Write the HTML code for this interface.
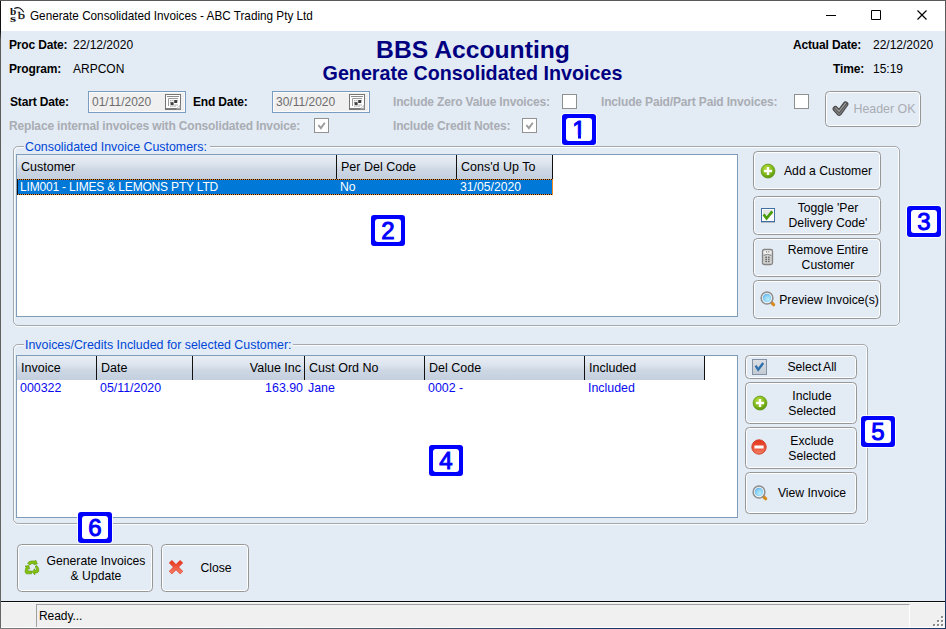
<!DOCTYPE html>
<html><head><meta charset="utf-8"><title>Generate Consolidated Invoices</title>
<style>
*{box-sizing:border-box;margin:0;padding:0}
html,body{width:946px;height:629px;overflow:hidden;background:#e3ebf5;font-family:"Liberation Sans",sans-serif;font-size:12px;color:#000}
.a{position:absolute;white-space:nowrap}
#win{position:absolute;left:0;top:0;width:946px;height:629px;background:#e3ebf5}
#title{position:absolute;left:0;top:0;width:946px;height:31px;background:#fff}
#title .t{position:absolute;left:30px;top:7.700px;font-size:11.7px;color:#000;transform:scale(1.003,1.1);transform-origin:0 0}
.b{font-weight:bold;font-size:12px;letter-spacing:-0.16px}
.g{color:#a9adb3}
.h1{font-size:24.7px;font-weight:bold;color:#000080;text-align:center;width:946px;left:0}
.h2{font-size:19.7px;font-weight:bold;color:#000080;text-align:center;width:945px;left:0}
.inp{position:absolute;height:22px;border:1px solid #7a9cc0;background:#f0f0f0;box-shadow:inset 0 0 0 1px #fbfbfb;color:#6d6d6d;font-size:12px;padding:3px 0 0 3px}
.cb{position:absolute;width:15px;height:15px;border:1px solid #8e8f8f;background:#fff}
.cbd{position:absolute;width:15px;height:15px;border:1px solid #929292;background:#fff}
.grp{position:absolute;border:1px solid #a5a8ad;border-radius:5px;box-shadow:inset 1px 1px 0 #fbfcfe,inset -1px 0 0 #fbfcfe,0 1px 0 #fbfcfe}
.grp .lg{position:absolute;top:-7px;left:10px;background:#e3ebf5;color:#0046d5;font-size:12.4px;padding:0 3px 0 1px;line-height:14px}
.tbl{position:absolute;background:#fff;border:1px solid #7f9db9}
.th{position:absolute;top:0;font-size:12.5px;background:linear-gradient(#e9eef5,#dbe3ed 40%,#cdd7e4 60%,#c4cfdf);border-right:1px solid #111;padding:5px 0 0 4px;color:#000}
.btn{position:absolute;border:1px solid #979797;border-radius:4.500px;background:#e3ebf5;box-shadow:inset 0 0 0 1px #fdfeff;font-size:12.2px;color:#000;text-align:center;line-height:15px}
.num{position:absolute;width:34px;height:31px;padding:4px;border-radius:3px;background:#0000ff;box-shadow:0 0 0 1px rgba(255,255,255,.85)}
.num span{display:block;width:26px;height:23px;border-radius:3px;background:#fff;color:#0000ff;font-size:24px;line-height:23px;text-align:center;-webkit-text-stroke:1px #0000ff}
.ic{position:absolute}
</style></head><body>
<div id="win">
<svg width="0" height="0" style="position:absolute"><defs>
<radialGradient id="gG" cx="0.4" cy="0.3" r="0.8"><stop offset="0" stop-color="#b4dc3c"/><stop offset="0.6" stop-color="#7cb518"/><stop offset="1" stop-color="#4f8a08"/></radialGradient>
<linearGradient id="gR" x1="0" y1="0" x2="0" y2="1"><stop offset="0" stop-color="#e23a22"/><stop offset="0.5" stop-color="#ea4d34"/><stop offset="1" stop-color="#f68468"/></linearGradient>
<radialGradient id="gL" cx="0.6" cy="0.65" r="0.7"><stop offset="0" stop-color="#b8ecfa"/><stop offset="0.7" stop-color="#86cdf3"/><stop offset="1" stop-color="#4aa3e8"/></radialGradient>
<linearGradient id="gB" x1="0" y1="0" x2="0" y2="1"><stop offset="0" stop-color="#dcdfe3"/><stop offset="1" stop-color="#c3cad3"/></linearGradient>
<linearGradient id="gX" x1="0" y1="0" x2="0" y2="1"><stop offset="0" stop-color="#e8391f"/><stop offset="1" stop-color="#f57a64"/></linearGradient>
</defs></svg>
<div id="title">
<svg class="ic" style="left:8px;top:4px" width="20" height="20" viewBox="0 0 20 20"><g font-family="Liberation Serif,serif" fill="#111"><text transform="translate(1.9 10.6) scale(1.05 1)" font-size="10.800" font-weight="bold">b</text><text transform="translate(1.9 17.7) scale(1.5 1)" font-size="10.400" font-weight="bold">s</text><text transform="translate(9.7 14.7) scale(1.35 1)" font-size="10.800" stroke="#111" stroke-width="0.250">b</text></g><path d="M6.300 4.600Q12 1.400 15.800 8.300" stroke="#111" stroke-width="1.100" fill="none"/></svg>
<span class="t">Generate Consolidated Invoices - ABC Trading Pty Ltd</span>
<svg class="ic" style="left:820px;top:5px" width="120" height="20" viewBox="0 0 120 20"><path d="M6 10.5h10M51.500 5.500h9v9h-9z" stroke="#000" stroke-width="1" fill="none"/><path d="M97.500 5.500l9 9M106.500 5.500l-9 9" stroke="#000" stroke-width="1.200" fill="none"/></svg>
</div>

<span class="a b" style="left:9px;top:38px">Proc Date:</span><span class="a" style="left:73px;top:38px">22/12/2020</span>
<span class="a b" style="left:9px;top:62px">Program:</span><span class="a" style="left:73px;top:62px">ARPCON</span>
<span class="a h1" style="top:36px">BBS Accounting</span>
<span class="a h2" style="top:62px">Generate Consolidated Invoices</span>
<span class="a b" style="left:793px;top:38px">Actual Date:</span><span class="a" style="left:873px;top:38px">22/12/2020</span>
<span class="a b" style="left:833px;top:62px">Time:</span><span class="a" style="left:873px;top:62px">15:19</span>

<span class="a b" style="left:10px;top:95px">Start Date:</span>
<div class="inp" style="left:88px;top:91px;width:98px">01/11/2020<svg class="ic" style="left:76px;top:2px" width="16" height="16" viewBox="0 0 16 16"><rect x="0.500" y="0.500" width="15" height="15" fill="#fff" stroke="#747474"/><rect x="1" y="14" width="14" height="1.500" fill="#7c7c7c"/><path d="M2 2.500h12" stroke="#8a8a8a"/><path d="M3.500 4.500h9.500M3.500 4.500v7.500" stroke="#9a9a9a" fill="none"/><g fill="#a8a8a8"><rect x="5" y="6" width="1.300" height="1.300"/><rect x="7.200" y="6" width="1.300" height="1.300"/><rect x="11.400" y="6" width="1.300" height="1.300"/><rect x="5" y="8" width="1.300" height="1.300"/><rect x="9.400" y="10.400" width="1.300" height="1.300"/><rect x="11.400" y="10.400" width="1.300" height="1.300"/><rect x="5" y="11.800" width="1.300" height="1"/><rect x="7.200" y="11.800" width="1.300" height="1"/><rect x="9.400" y="11.800" width="1.300" height="1"/></g><rect x="9.200" y="6" width="3" height="3" fill="#3e3e3e"/><rect x="5.600" y="8.200" width="3" height="3" fill="#3e3e3e"/><path d="M10.500 15.500l5 -5v5z" fill="#9a9a9a"/><path d="M12.200 14.200l2.500 -2.500v2.500z" fill="#f2f2f2"/></svg></div>
<span class="a b" style="left:193px;top:95px">End Date:</span>
<div class="inp" style="left:272px;top:91px;width:98px">30/11/2020<svg class="ic" style="left:76px;top:2px" width="16" height="16" viewBox="0 0 16 16"><rect x="0.500" y="0.500" width="15" height="15" fill="#fff" stroke="#747474"/><rect x="1" y="14" width="14" height="1.500" fill="#7c7c7c"/><path d="M2 2.500h12" stroke="#8a8a8a"/><path d="M3.500 4.500h9.500M3.500 4.500v7.500" stroke="#9a9a9a" fill="none"/><g fill="#a8a8a8"><rect x="5" y="6" width="1.300" height="1.300"/><rect x="7.200" y="6" width="1.300" height="1.300"/><rect x="11.400" y="6" width="1.300" height="1.300"/><rect x="5" y="8" width="1.300" height="1.300"/><rect x="9.400" y="10.400" width="1.300" height="1.300"/><rect x="11.400" y="10.400" width="1.300" height="1.300"/><rect x="5" y="11.800" width="1.300" height="1"/><rect x="7.200" y="11.800" width="1.300" height="1"/><rect x="9.400" y="11.800" width="1.300" height="1"/></g><rect x="9.200" y="6" width="3" height="3" fill="#3e3e3e"/><rect x="5.600" y="8.200" width="3" height="3" fill="#3e3e3e"/><path d="M10.500 15.500l5 -5v5z" fill="#9a9a9a"/><path d="M12.200 14.200l2.500 -2.500v2.500z" fill="#f2f2f2"/></svg></div>
<span class="a b g" style="left:393px;top:95px">Include Zero Value Invoices:</span>
<div class="cb" style="left:562px;top:94px"></div>
<span class="a b g" style="left:601px;top:95px">Include Paid/Part Paid Invoices:</span>
<div class="cb" style="left:794px;top:94px"></div>
<span class="a b g" style="left:9px;top:119px">Replace internal invoices with Consolidated Invoice:</span>
<div class="cbd" style="left:314px;top:118px"><svg class="ic" style="left:0;top:0" width="13" height="13" viewBox="0 0 13 13"><path d="M3.400 6.200l2.500 2.900l3.900 -5.400" stroke="#9c9c9c" stroke-width="1.900" fill="none"/></svg></div>
<span class="a b g" style="left:393px;top:119px">Include Credit Notes:</span>
<div class="cbd" style="left:522px;top:118px"><svg class="ic" style="left:0;top:0" width="13" height="13" viewBox="0 0 13 13"><path d="M3.400 6.200l2.500 2.900l3.900 -5.400" stroke="#9c9c9c" stroke-width="1.900" fill="none"/></svg></div>
<div class="btn" style="left:825px;top:91px;width:96px;height:36px;line-height:34px;padding-left:23px;font-size:12.4px;color:#a9adb3">Header OK<svg class="ic" style="left:5px;top:7px" width="20" height="20" viewBox="0 0 20 20"><g fill="none" stroke-linejoin="round" stroke-linecap="round"><path d="M4.400 9.800l3.800 4.200l6.400 -8.800" stroke="#484848" stroke-width="5.600"/><path d="M4.400 9.800l3.800 4.200l6.400 -8.800" stroke="#7c7c7c" stroke-width="3.600"/><path d="M4.400 8.600l3.800 3.600l6.400 -8" stroke="#484848" stroke-width="2.800"/><path d="M4.400 8.600l3.800 3.600l6.400 -8" stroke="#a2a2a2" stroke-width="1.300"/></g></svg></div>

<div class="grp" style="left:13px;top:146px;width:887px;height:180px"><span class="lg">Consolidated Invoice Customers:</span></div>
<div class="tbl" style="left:16px;top:154px;width:722px;height:163px">
 <div class="th" style="left:0;width:320px;height:24px">Customer</div>
 <div class="th" style="left:320px;width:120px;height:24px">Per Del Code</div>
 <div class="th" style="left:440px;width:96px;height:24px">Cons'd Up To</div>
 <div class="a" style="left:0;top:24px;width:536px;height:16px;background:repeating-linear-gradient(90deg,#111 0 1px,#f08a24 1px 2px)"><div class="a" style="left:1px;top:1px;width:534px;height:14px;background:#0078d7"></div></div>
 <div class="a" style="left:0;top:25px;color:#fff;font-size:12.200px;line-height:14px"><span class="a" style="left:3px;font-size:12px;letter-spacing:-0.18px">LIM001 - LIMES &amp; LEMONS PTY LTD</span><span class="a" style="left:323px">No</span><span class="a" style="left:443px">31/05/2020</span></div>
</div>
<div class="btn" style="left:753px;top:151px;width:128px;height:39px;line-height:39px;padding-left:22px">Add a Customer<svg class="ic" style="left:5px;top:9.500px" width="18" height="18" viewBox="0 0 18 18"><circle cx="9" cy="9.6" r="7" fill="#7c8f5a" opacity="0.35"/><circle cx="9" cy="9" r="6.900" fill="url(#gG)" stroke="#5f9a10" stroke-width="0.800"/><path d="M9 4.900v8.200M4.900 9h8.200" stroke="#fff" stroke-width="2.400"/></svg></div>
<div class="btn" style="left:753px;top:196px;width:128px;height:39px;padding:4px 0 0 22px">Toggle 'Per<br>Delivery Code'<svg class="ic" style="left:7px;top:11px" width="16" height="16" viewBox="0 0 16 16"><rect x="0" y="14" width="14" height="1" fill="#8a8f96" opacity="0.55"/><rect x="0.500" y="0.500" width="13" height="13" fill="#fdfdfd" stroke="#3f6fa3" stroke-width="1"/><rect x="2" y="2" width="10" height="5" fill="#e6e6e6"/><path d="M2.600 6.400l3 3.900l5.700 -6.900" stroke="#4a9c08" stroke-width="2.700" fill="none"/></svg></div>
<div class="btn" style="left:753px;top:238px;width:128px;height:39px;padding:4px 0 0 22px">Remove Entire<br>Customer<svg class="ic" style="left:7px;top:9px" width="14" height="18" viewBox="0 0 14 18"><rect x="1.500" y="1.500" width="10" height="15" rx="1.800" fill="#d6d6d6" stroke="#858585" stroke-width="1.300"/><ellipse cx="6.500" cy="4.200" rx="4" ry="1.900" fill="#f2f2f2"/><path d="M2.600 7.600q3.900 -2.600 7.800 0" stroke="#858585" fill="none"/><g fill="#666"><rect x="4.300" y="8.600" width="1.700" height="1.400"/><rect x="6.900" y="8.600" width="1.700" height="1.400"/><rect x="4.300" y="10.700" width="1.700" height="1.400"/><rect x="6.900" y="10.700" width="1.700" height="1.400"/><rect x="4.300" y="12.800" width="1.700" height="1.400"/><rect x="6.900" y="12.800" width="1.700" height="1.400"/><rect x="5" y="3.400" width="1.200" height="1"/><rect x="7.200" y="3.400" width="1.200" height="1"/></g><g fill="#9a9a9a"><rect x="2.600" y="9.600" width="1" height="0.800"/><rect x="2.600" y="11.700" width="1" height="0.800"/><rect x="9.400" y="9.600" width="1" height="0.800"/><rect x="9.400" y="11.700" width="1" height="0.800"/></g></svg></div>
<div class="btn" style="left:753px;top:280px;width:128px;height:39px;line-height:38px;padding-left:24px">Preview Invoice(s)<svg class="ic" style="left:4.500px;top:8.800px" width="18" height="18" viewBox="0 0 18 18"><path d="M12 12.200l2.600 2.500" stroke="#d98a1c" stroke-width="3.200" stroke-linecap="round"/><circle cx="8" cy="8" r="5.900" fill="#f6f6f6" stroke="#8e8e8e" stroke-width="1.500"/><circle cx="8" cy="8" r="4.300" fill="url(#gL)"/></svg></div>

<div class="grp" style="left:13px;top:344px;width:855px;height:180px"><span class="lg" style="padding-right:1px">Invoices/Credits Included for selected Customer:</span></div>
<div class="tbl" style="left:16px;top:355px;width:722px;height:163px">
 <div class="th" style="left:0;width:80px;height:24px">Invoice</div>
 <div class="th" style="left:80px;width:96px;height:24px">Date</div>
 <div class="th" style="left:176px;width:112px;height:24px;text-align:right;padding-right:3px">Value Inc</div>
 <div class="th" style="left:288px;width:120px;height:24px">Cust Ord No</div>
 <div class="th" style="left:408px;width:160px;height:24px">Del Code</div>
 <div class="th" style="left:568px;width:120px;height:24px">Included</div>
 <div class="a" style="left:0;top:25px;color:#0a0af0;font-size:12.4px"><span class="a" style="left:3px">000322</span><span class="a" style="left:83px">05/11/2020</span><span class="a" style="left:176px;width:110px;text-align:right">163.90</span><span class="a" style="left:291px">Jane</span><span class="a" style="left:411px">0002 -</span><span class="a" style="left:571px">Included</span></div>
</div>
<div class="btn" style="left:745px;top:355px;width:112px;height:24px;line-height:22px;padding-left:22px;word-spacing:-1px">Select All<svg class="ic" style="left:6px;top:3px" width="16" height="17" viewBox="0 0 16 17"><rect x="0.500" y="0.500" width="14" height="15" fill="url(#gB)" stroke="#8492a6"/><path d="M3.600 6.600l2.600 4l5 -6.600" stroke="#2f6fad" stroke-width="2.400" fill="none"/></svg></div>
<div class="btn" style="left:745px;top:382px;width:112px;height:42px;padding:6px 0 0 22px">Include<br>Selected<svg class="ic" style="left:5px;top:11px" width="18" height="18" viewBox="0 0 18 18"><circle cx="9" cy="9.6" r="7" fill="#7c8f5a" opacity="0.35"/><circle cx="9" cy="9" r="6.900" fill="url(#gG)" stroke="#5f9a10" stroke-width="0.800"/><path d="M9 4.900v8.200M4.900 9h8.200" stroke="#fff" stroke-width="2.400"/></svg></div>
<div class="btn" style="left:745px;top:427px;width:112px;height:42px;padding:6px 0 0 22px">Exclude<br>Selected<svg class="ic" style="left:4.200px;top:9.900px" width="18" height="18" viewBox="0 0 18 18"><circle cx="9" cy="9" r="7.200" fill="url(#gR)" stroke="#cf3a22" stroke-width="0.900"/><rect x="4.400" y="7.500" width="9.200" height="3" fill="#fff"/></svg></div>
<div class="btn" style="left:745px;top:472px;width:112px;height:42px;line-height:40px;padding-left:22px">View Invoice<svg class="ic" style="left:4.500px;top:11.100px" width="18" height="18" viewBox="0 0 18 18"><path d="M12 12.200l2.600 2.500" stroke="#d98a1c" stroke-width="3.200" stroke-linecap="round"/><circle cx="8" cy="8" r="5.900" fill="#f6f6f6" stroke="#8e8e8e" stroke-width="1.500"/><circle cx="8" cy="8" r="4.300" fill="url(#gL)"/></svg></div>

<div class="btn" style="left:17px;top:544px;width:136px;height:48px;padding:9px 0 0 22px">Generate Invoices<br>&amp; Update<svg class="ic" style="left:6px;top:15px" width="17" height="17" viewBox="0 0 17 17"><g transform="translate(0.3 0) scale(0.94 1.03)" fill="#86c20c" stroke="#5c9a08" stroke-width="0.700" stroke-linejoin="round"><path d="M3.500 3.200q1.500 -2.300 4.500 -2.200h3.200l1 -0.800l1.600 3.600l-3.800 0.600l0.800 -1h-2.600q-1.400 0.100 -2.200 1.600z"/><path d="M0.800 6l3.800 -0.600l1.200 3.200l-1.400 -0.500q-0.900 1.700 -0.700 2.600h4v2.700h-5.200q-1.900 -0.300 -1.600 -2.900q0.200 -1.800 1.200 -3.800z"/><path d="M12.600 5.200q1.800 0.800 2.600 3q0.700 2.400 -0.600 3.600q-0.800 0.800 -2 0.800h-1.400v1.800l-3 -3l3 -3v1.700h1.300q0.800 -0.200 0.600 -1.400q-0.400 -1.200 -1.500 -1.800z"/></g></svg></div>
<div class="btn" style="left:161px;top:544px;width:88px;height:48px;line-height:46px;padding-left:22px">Close<svg class="ic" style="left:6px;top:14px" width="18" height="18" viewBox="0 0 18 18"><path d="M2.400 2.450l11.200 11.200M13.600 2.450l-11.200 11.200" stroke="#e0432c" stroke-width="4.300" stroke-linecap="butt"/><path d="M2.700 2.750l10.600 10.600M13.300 2.750l-10.600 10.600" stroke="url(#gX)" stroke-width="3"/></svg></div>

<div class="num" style="left:562px;top:114px"><span>1</span><i style="position:absolute;left:9.500px;top:21px;width:6.500px;height:5.500px;background:#fff"></i><i style="position:absolute;left:19.300px;top:21px;width:7.500px;height:5.500px;background:#fff"></i></div>
<div class="num" style="left:371px;top:215px"><span>2</span></div>
<div class="num" style="left:907px;top:206px"><span>3</span></div>
<div class="num" style="left:429px;top:445px"><span>4</span></div>
<div class="num" style="left:861px;top:416px"><span>5</span></div>
<div class="num" style="left:78px;top:512px"><span>6</span></div>

<div class="a" style="left:0;top:601px;width:946px;height:1px;background:#0a0a0a"></div>
<div class="a" style="left:0;top:602px;width:946px;height:27px;background:#f0f0f0;border-top:1px solid #f8f8f8"></div>
<div class="a" style="left:36px;top:604px;width:874px;height:24px;border:1px solid #a0a0a0;border-right-color:#fff;border-bottom-color:#fff;background:#f0f0f0;font-size:12px;letter-spacing:-0.05px;padding:4px 0 0 2px">Ready...</div>
<div class="a" style="left:1px;top:627px;width:944px;height:1px;background:#fcfcfc"></div>
<svg class="ic" style="left:930px;top:614px" width="14" height="14" viewBox="0 0 14 14"><g fill="#fff"><rect x="12" y="3" width="2" height="2"/><rect x="8" y="7" width="2" height="2"/><rect x="12" y="7" width="2" height="2"/><rect x="4" y="11" width="2" height="2"/><rect x="8" y="11" width="2" height="2"/><rect x="12" y="11" width="2" height="2"/></g><g fill="#8c8c8c"><rect x="11" y="2" width="2" height="2"/><rect x="7" y="6" width="2" height="2"/><rect x="11" y="6" width="2" height="2"/><rect x="3" y="10" width="2" height="2"/><rect x="7" y="10" width="2" height="2"/><rect x="11" y="10" width="2" height="2"/></g></svg>
<div class="a" style="left:0;top:0;width:1px;height:629px;background:linear-gradient(#111 0,#111 31px,#5c5c5c 40px,#666 100%)"></div><div class="a" style="left:0;top:0;width:946px;height:1px;background:#5a5a5a"></div><div class="a" style="left:945px;top:0;width:1px;height:629px;background:linear-gradient(#555 0,#666 40px,#4a5670 300px,#1c3a66 560px)"></div><div class="a" style="left:0;top:628px;width:946px;height:1px;background:linear-gradient(90deg,#7a7a7a,#5a6470 300px,#1c3a66 600px)"></div>
</div>
</body></html>
